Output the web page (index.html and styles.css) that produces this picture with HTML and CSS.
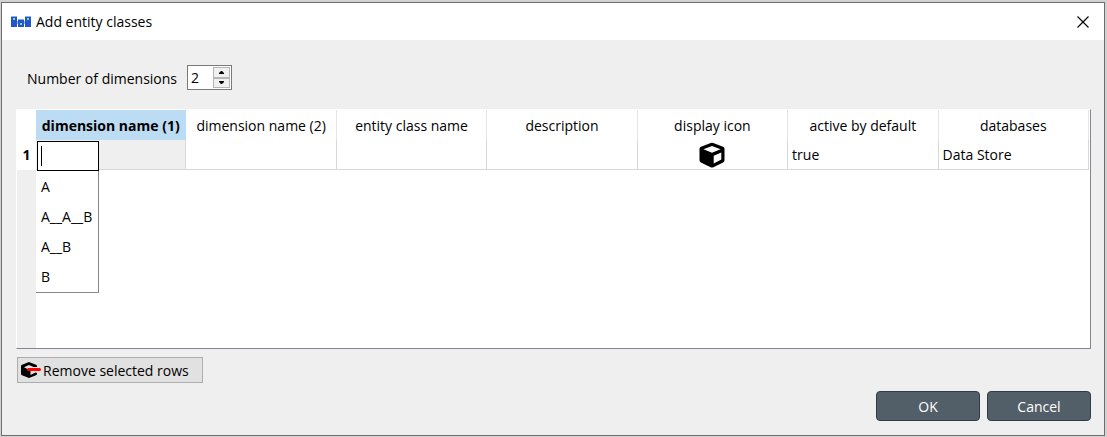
FILE: index.html
```html
<!DOCTYPE html>
<html lang="en">
<head>
<meta charset="utf-8">
<title>Add entity classes</title>
<link rel="stylesheet" href="styles.css">
</head>
<body>
<main class="dialog">
  <header class="titlebar">
    <svg class="app-icon" viewBox="0 0 20 12" aria-hidden="true">
      <path fill="#8fb0ea" d="M5 5h10v3H5z"/>
      <path fill="#2455c8" d="M0 1h6v10H0zM7 4h6v7H7zM14 1h6v10h-6z"/>
      <path fill="#8fb0ea" d="M0 0h6v1H0zM14 0h6v1h-6zM7 3h6v1H7z"/>
      <path fill="#7fdc9c" d="M2 2h2v2H2zM9 7h2v2H9zM16 2h2v2h-2z"/>
    </svg>
    <h1 class="title">Add entity classes</h1>
    <button class="close" type="button" aria-label="Close">
      <svg viewBox="0 0 12 12"><path d="M0.5 0.5l11 11M11.5 0.5l-11 11" stroke="#000" stroke-width="1.2" fill="none"/></svg>
    </button>
  </header>
  <form class="content">
    <div class="dimensions">
      <label for="dims">Number of dimensions</label>
      <div class="spin">
        <input id="dims" class="spin-value" type="number" value="2">
        <div class="spin-buttons">
          <button type="button" aria-label="Increase"><svg viewBox="0 0 5 3"><path d="M0 3h5v-1L3 0H2L0 2z"/></svg></button>
          <button type="button" aria-label="Decrease"><svg viewBox="0 0 5 3"><path d="M0 0h5v1L3 3H2L0 1z"/></svg></button>
        </div>
      </div>
    </div>
    <div class="grid">
      <table class="classes">
        <colgroup><col class="index-col"><col span="7"></colgroup>
        <thead>
          <tr>
            <td></td>
            <th scope="col" class="active">dimension name (1)</th>
            <th scope="col">dimension name (2)</th>
            <th scope="col">entity class name</th>
            <th scope="col">description</th>
            <th scope="col">display icon</th>
            <th scope="col">active by default</th>
            <th scope="col">databases</th>
          </tr>
        </thead>
        <tbody>
          <tr>
            <th scope="row" class="row-index">1</th>
            <td class="editing">
              <div class="editor">
                <div class="editor-box"><span class="caret"></span><input class="editor-input" type="text" aria-label="dimension name (1)"></div>
                <ul class="options">
                  <li>A</li>
                  <li>A__A__B</li>
                  <li>A__B</li>
                  <li>B</li>
                </ul>
              </div>
            </td>
            <td></td>
            <td></td>
            <td></td>
            <td class="icon-cell">
              <svg class="cube" viewBox="0 0 26 26" role="img" aria-label="Cube">
                <path fill-rule="evenodd" d="M11.700 1q1.300-.5 2.600 0l9.700 3.700q1.500.6 1.500 2.100v11.400q0 1.500-1.400 2.200l-9.700 4.800q-1.400.7-2.800 0L1.900 20.400Q.5 19.700.5 18.200V6.800q0-1.500 1.500-2.100zM13 4.100L4.500 7.300 13 10.800l8.500-3.500zM14.700 13.700v7.700l7.600-3.800v-7z"/>
              </svg>
            </td>
            <td>true</td>
            <td>Data Store</td>
          </tr>
        </tbody>
      </table>
    </div>
    <button class="remove" type="button">
      <svg class="remove-icon" viewBox="0 0 20 16" aria-hidden="true">
        <path d="M8 0L1 2.700Q0 3.200 0 4v8q0 .8 1 1.300L8 16l7-2.700q1-.5 1-1.300v-1l-1.500-.5L9.500 13V8.500L3 5.200 8 3l4.500 2H16V4q0-.8-1-1.300z"/>
        <path stroke="#f00" stroke-width="3" stroke-linecap="round" d="M7.500 7.500h11"/>
      </svg>
      <span>Remove selected rows</span>
    </button>
    <div class="actions">
      <button class="action" type="submit">OK</button>
      <button class="action" type="button">Cancel</button>
    </div>
  </form>
</main>
</body>
</html>
```
FILE: styles.css
```css
* { box-sizing: border-box; }

body {
  margin: 0;
  padding: 2px 2px 1px 1px;
  min-height: 100vh;
  display: flex;
  background: #d2d2d2;
  color: #000;
  font: 14px/20px "Open Sans", "Noto Sans", sans-serif;
}

button, input { font: inherit; color: inherit; }
button { padding: 0; border: 0; }
svg { display: block; }

.dialog {
  flex: 1;
  min-width: 0;
  display: flex;
  flex-direction: column;
  border: 1px solid #6e6e6e;
  background: #efefef;
}

.titlebar {
  display: flex;
  align-items: center;
  height: 37px;
  padding: 0 15px 0 9px;
  background: #fff;
}
.app-icon { width: 20px; height: 12px; }
.title { flex: 1; margin: 0 0 0 5px; font-size: 14px; font-weight: 400; }
.close { background: none; }
.close svg { width: 12px; height: 12px; }

.content {
  flex: 1;
  display: flex;
  flex-direction: column;
  padding: 25px 13px 14px 14px;
}

.dimensions {
  display: flex;
  align-items: center;
  gap: 10px;
  padding-left: 11px;
  margin-bottom: 19px;
}
.dimensions label { padding-top: 2px; }
.spin {
  display: flex;
  width: 45px;
  height: 25px;
  border: 1px solid #7a7a7a;
  background: #fff;
}
.spin-value {
  flex: 1;
  min-width: 0;
  padding: 0 0 0 3px;
  border: 0;
  outline: 0;
  background: none;
  appearance: textfield;
}
.spin-value::-webkit-inner-spin-button { appearance: none; margin: 0; }
.spin-buttons { display: flex; flex-direction: column; width: 19px; padding: 1px; }
.spin-buttons button {
  flex: 1;
  display: grid;
  place-items: center;
  border: 1px solid #b5b5b5;
  background: #f0f0f0;
}
.spin-buttons svg { width: 5px; height: 3px; }

.grid {
  flex: 1;
  padding-right: 1px;
  border: 1px solid #828790;
  border-top-color: #fff;
  border-left-color: #fff;
  background: linear-gradient(#efefef, #efefef) 0 0 / 19px 100% no-repeat #fff;
}
.classes {
  width: 100%;
  table-layout: fixed;
  border-collapse: separate;
  border-spacing: 0;
  background: #fff;
}
.index-col { width: 19px; }
.classes th, .classes td {
  height: 30px;
  padding: 0;
  white-space: nowrap;
}
.classes thead th { border-right: 1px solid #e5e5e5; font-weight: 400; padding-top: 2px; }
.classes thead .active { border-color: #bcdcf4; background: #bcdcf4; font-weight: 700; }
.classes tbody td {
  padding-left: 4px;
  border-right: 1px solid #d8d8d8;
  border-bottom: 1px solid #d8d8d8;
}
.classes tbody .editing { padding: 0; background: #efefef; vertical-align: top; }
.classes tbody .icon-cell { padding: 0; }
.cube { width: 26px; height: 26px; margin: 0 auto; }

.editor { position: relative; height: 29px; }
.editor-box {
  position: absolute;
  top: 1px;
  left: 1px;
  display: flex;
  align-items: center;
  width: 62px;
  height: 30px;
  padding-left: 3px;
  border: 1px solid #000;
  background: #fff;
}
.caret { width: 1px; height: 20px; background: #000; }
.editor-input { width: 100%; min-width: 0; padding: 0; border: 0; outline: 0; background: none; }
.options {
  position: absolute;
  top: 31px;
  left: 0;
  width: 63px;
  margin: 0;
  padding: 1px 0 0 5px;
  list-style: none;
  line-height: 30px;
  border: solid #828790;
  border-width: 0 1px 1px 0;
  background: #fff;
}

.remove {
  align-self: flex-start;
  display: flex;
  align-items: center;
  gap: 2px;
  height: 26px;
  margin: 8px 0 8px 1px;
  padding: 0 13px 0 3px;
  border: 1px solid #adadad;
  background: #e1e1e1;
}
.remove span { padding-top: 2px; }
.remove-icon { width: 20px; height: 16px; }

.actions { display: flex; justify-content: flex-end; gap: 7px; }
.action {
  width: 104px;
  height: 30px;
  padding-top: 1px;
  border: 1px solid #2e3d48;
  border-radius: 4px;
  background: #525f69;
  color: #fff;
}
```
